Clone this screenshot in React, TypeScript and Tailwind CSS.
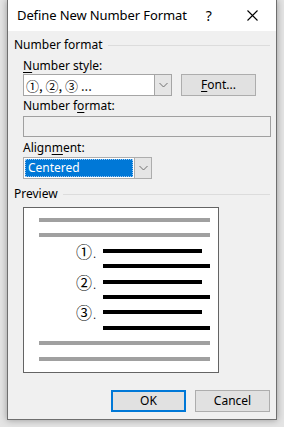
import React from "react";

const F = { fontFamily: '"Noto Sans", "Noto Sans CJK SC", sans-serif' };

function Chevron() {
  return (
    <svg width="9" height="6" viewBox="0 0 9 6">
      <path d="M0.5 1 L4.5 5 L8.5 1" fill="none" stroke="#707070" strokeWidth="1" />
    </svg>
  );
}

function Bar({ w, c }: { w: number; c: string }) {
  return <div className="h-[4px]" style={{ width: w, background: c }} />;
}

function NumRow({ n }: { n: string }) {
  return (
    <div className="flex h-[16px] items-start">
      <div className="relative h-[4px] w-[79px]">
        <span
          className="absolute right-[11px] top-[-8px] text-[16px] leading-[20px] text-black"
          style={{ fontFamily: '"Noto Sans CJK SC", sans-serif' }}
        >
          {n}
        </span>
        <span className="absolute right-[7px] top-[0px] text-[10px] leading-[10px] text-black">.</span>
      </div>
      <Bar w={99} c="#000" />
    </div>
  );
}

function PlainRow({ w, c, pl }: { w: number; c: string; pl: number }) {
  return (
    <div className="flex h-[16px] items-start" style={{ paddingLeft: pl }}>
      <Bar w={w} c={c} />
    </div>
  );
}

export default function App() {
  return (
    <div className="h-[427px] w-[284px] overflow-hidden bg-[#e4e4e4] text-[12px] text-black" style={F}>
      <div className="ml-[7px] flex h-[420px] w-[270px] flex-col border-x border-b border-[#6f6f6f] bg-[#f0f0f0] shadow-[0_0_7px_rgba(0,0,0,0.35)]">
        {/* Title bar */}
        <div className="flex h-[31px] items-center bg-white pl-[9px]">
          <span className="text-[13px] leading-none tracking-[-0.1px]">Define New Number Format</span>
          <span className="ml-[19px] text-[14px] leading-none">?</span>
          <span className="ml-[35px]">
            <svg width="11" height="11" viewBox="0 0 11 11">
              <path d="M0.5 0.5 L10.5 10.5 M10.5 0.5 L0.5 10.5" stroke="#000" strokeWidth="1.1" />
            </svg>
          </span>
        </div>

        <div className="flex flex-col pl-[6px]">
          {/* Number format group */}
          <div className="mt-[6px] flex h-[16px] items-center">
            <span className="leading-[16px]">Number format</span>
            <div className="ml-[5px] mr-[6px] h-px flex-1 bg-[#dcdcdc]" />
          </div>
          <div className="pl-[9px]">
            <div className="mt-[5px] h-[16px] leading-[16px]">
              <span className="underline underline-offset-2">N</span>umber style:
            </div>
            <div className="flex">
              <div className="flex h-[22px] w-[149px] border border-[#a5a5a5] bg-white">
                <div className="flex flex-1 items-center pl-[2px] leading-none">
                  <span className="text-[13px]" style={{ fontFamily: '"Noto Sans CJK SC", sans-serif' }}>①, ②, ③ ...</span>
                </div>
                <div className="flex w-[17px] items-center justify-center border-l border-[#a5a5a5] bg-[#e5e5e5]">
                  <Chevron />
                </div>
              </div>
              <div className="ml-[9px] flex h-[22px] w-[75px] items-center justify-center border border-[#adadad] bg-[#e1e1e1]">
                <span>
                  <span className="underline underline-offset-2">F</span>ont...
                </span>
              </div>
            </div>
            <div className="mt-[2px] h-[16px] leading-[16px]">
              Number f<span className="underline underline-offset-2">o</span>rmat:
            </div>
            <div className="mt-[2px] h-[21px] w-[248px] border border-[#a0a0a0] bg-[#f0f0f0]" />
            <div className="mt-[3px] h-[16px] leading-[16px]">
              Align<span className="underline underline-offset-2">m</span>ent:
            </div>
            <div className="mt-[1px] flex h-[22px] w-[129px] border border-[#adadad] bg-white">
              <div className="m-[1px] flex flex-1 items-center border border-dotted border-[#9cc8f0] bg-[#0078d7] pl-[2px] leading-none text-white">
                Centered
              </div>
              <div className="flex w-[17px] items-center justify-center border-l border-[#adadad] bg-[#e5e5e5]">
                <Chevron />
              </div>
            </div>
          </div>

          {/* Preview group */}
          <div className="mt-[7px] flex h-[16px] items-center">
            <span className="leading-[16px]">Preview</span>
            <div className="ml-[5px] mr-[6px] h-px flex-1 bg-[#dcdcdc]" />
          </div>
          <div className="ml-[9px] mt-[5px] flex h-[166px] w-[196px] flex-col border border-[#646464] bg-white pt-[10px]">
            <PlainRow w={171} c="#a0a0a0" pl={15} />
            <PlainRow w={171} c="#a0a0a0" pl={15} />
            <NumRow n="①" />
            <PlainRow w={107} c="#000" pl={79} />
            <NumRow n="②" />
            <PlainRow w={107} c="#000" pl={79} />
            <NumRow n="③" />
            <PlainRow w={107} c="#000" pl={79} />
            <PlainRow w={171} c="#a0a0a0" pl={15} />
            <PlainRow w={171} c="#a0a0a0" pl={15} />
          </div>

          {/* Buttons */}
          <div className="mt-[17px] flex pl-[97px]">
            <div className="flex h-[22px] w-[75px] items-center justify-center border-2 border-[#0078d7] bg-[#e1e1e1]">
              OK
            </div>
            <div className="ml-[9px] flex h-[22px] w-[75px] items-center justify-center border border-[#adadad] bg-[#e1e1e1]">
              Cancel
            </div>
          </div>
        </div>
      </div>
    </div>
  );
}
